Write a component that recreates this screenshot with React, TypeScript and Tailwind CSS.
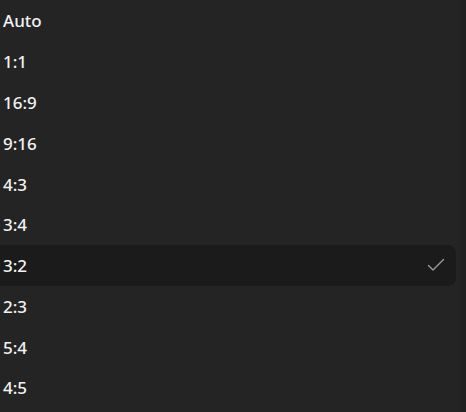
import React from "react";

const items = ["Auto", "1:1", "16:9", "9:16", "4:3", "3:4", "3:2", "2:3", "5:4", "4:5"];
const selected = "3:2";

export default function App() {
  return (
    <div className="w-[466px] h-[412px] bg-[#242424] overflow-hidden flex" style={{ fontFamily: '"Noto Sans", "Open Sans", sans-serif' }}>
      <div className="flex-1 flex flex-col pt-[0.6px] -ml-2">
        {items.map((it) => {
          const sel = it === selected;
          return (
            <div
              key={it}
              className={`h-[40.78px] shrink-0 flex items-center justify-between pl-[11px] pr-[11px] rounded-lg mr-[5px] ${sel ? "bg-[#1b1b1b]" : ""}`}
            >
              <span className="text-[17px] font-medium text-[#f2f2f2] leading-none">{it}</span>
              {sel && (
                <svg width="18" height="18" viewBox="0 0 18 18" fill="none">
                  <path d="M1.5 8.5 L6 13 L16.5 2.5" stroke="#9c9c9c" strokeWidth="1.4" strokeLinecap="round" strokeLinejoin="round" />
                </svg>
              )}
            </div>
          );
        })}
      </div>
      <div className="w-[5px] bg-[#202020]" />
    </div>
  );
}
